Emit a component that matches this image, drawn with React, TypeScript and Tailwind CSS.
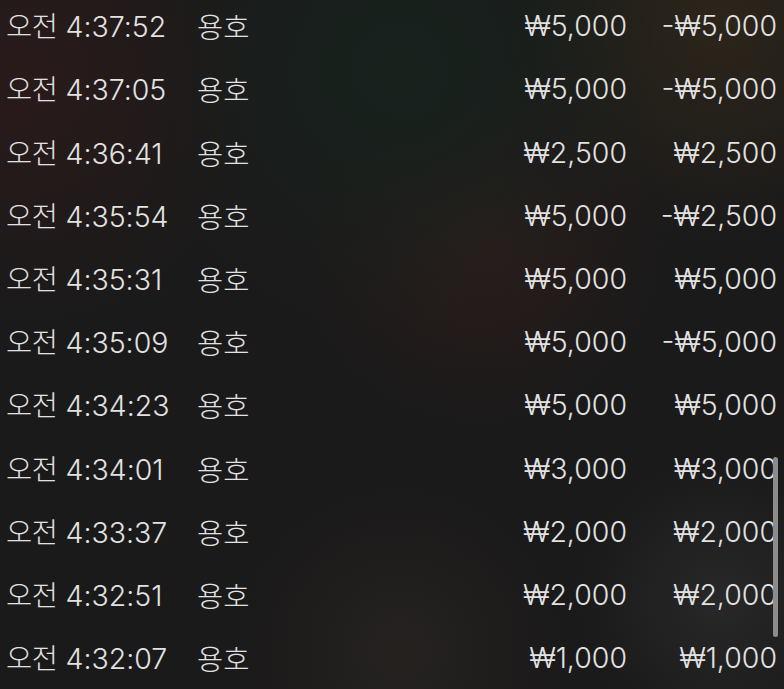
import React from "react";

const rows: [string, string, string][] = [
  ["4:37:52", "₩5,000", "-₩5,000"],
  ["4:37:05", "₩5,000", "-₩5,000"],
  ["4:36:41", "₩2,500", "₩2,500"],
  ["4:35:54", "₩5,000", "-₩2,500"],
  ["4:35:31", "₩5,000", "₩5,000"],
  ["4:35:09", "₩5,000", "-₩5,000"],
  ["4:34:23", "₩5,000", "₩5,000"],
  ["4:34:01", "₩3,000", "₩3,000"],
  ["4:33:37", "₩2,000", "₩2,000"],
  ["4:32:51", "₩2,000", "₩2,000"],
  ["4:32:07", "₩1,000", "₩1,000"],
];

export default function App() {
  return (
    <div className="relative h-[689px] w-[784px] overflow-hidden bg-[#1b1a1a] bg-[radial-gradient(circle_at_400px_70px,#17221d_0px,transparent_260px),radial-gradient(circle_at_720px_20px,#2c251a_0px,transparent_220px),radial-gradient(circle_at_20px_80px,#2a1a1a_0px,transparent_240px),radial-gradient(circle_at_480px_240px,#2a1d1b_0px,transparent_180px),radial-gradient(circle_at_400px_650px,#252220_0px,transparent_160px),radial-gradient(circle_at_720px_600px,#282828_0px,transparent_140px)] font-['Inter','Noto_Sans_CJK_KR',sans-serif] text-[28.5px] font-light text-[#e2e2e2]">
      <div className="-mt-[5px] flex flex-col">
        {rows.map(([t, a, b]) => (
          <div key={t} className="flex h-[63.2px] items-center">
            <div className="w-[197px] pl-[6px] whitespace-nowrap">
              <span className="font-['Noto_Sans_CJK_KR',sans-serif] tracking-[-0.5px]">오전</span> {t}
            </div>
            <div className="font-['Noto_Sans_CJK_KR',sans-serif] whitespace-nowrap">용호</div>
            <div className="ml-auto whitespace-nowrap text-right">{a}</div>
            <div className="w-[157px] pr-[7px] whitespace-nowrap text-right">{b}</div>
          </div>
        ))}
      </div>
      <div className="absolute left-[773px] top-[457px] h-[180px] w-[5px] rounded-full bg-[#8c8c8c]" />
    </div>
  );
}
